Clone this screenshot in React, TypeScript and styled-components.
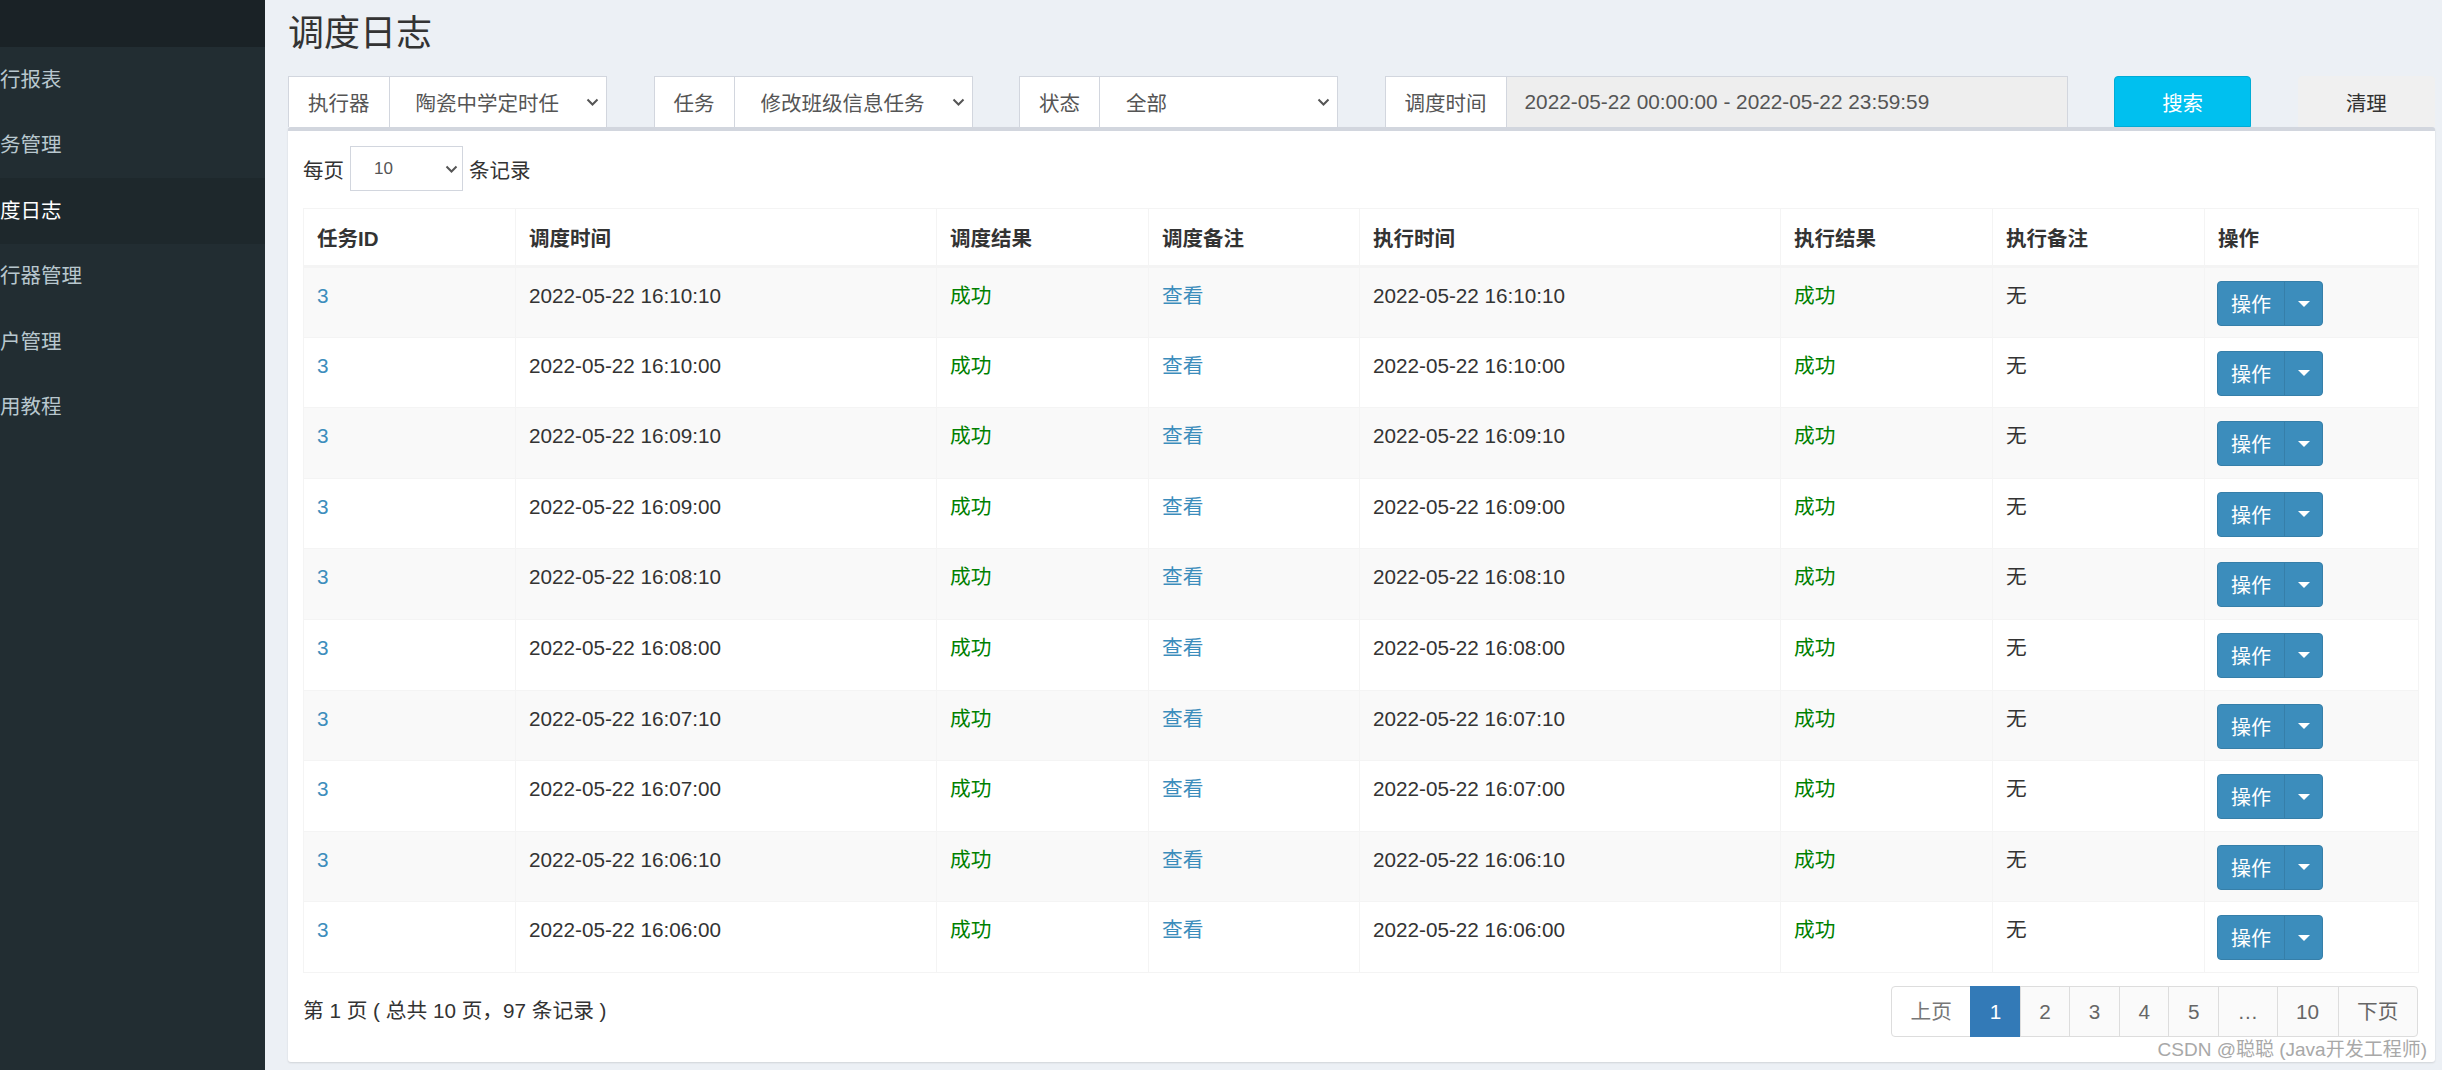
import styled, { createGlobalStyle } from "styled-components";

const GlobalStyle = createGlobalStyle`
  html, body {
    margin: 0;
    padding: 0;
  }
  body {
    background: #ecf0f5;
    font-family: "Liberation Sans", "Noto Sans CJK SC", sans-serif;
    color: #333;
  }
  * {
    box-sizing: border-box;
  }
`;

const Page = styled.div`
  position: relative;
  display: flex;
  width: 2442px;
  height: 1070px;
  overflow: hidden;
`;

const Sidebar = styled.aside`
  width: 265px;
  flex-shrink: 0;
  background: #222d32;
`;

const SidebarHead = styled.div`
  height: 47px;
  background: #1a2226;
`;

const MenuItem = styled.div<{ $active?: boolean }>`
  height: 65.5px;
  display: flex;
  align-items: center;
  padding-bottom: 4px;
  white-space: nowrap;
  font-size: 20.5px;
  color: ${(p) => (p.$active ? "#fff" : "#b8c7ce")};
  background: ${(p) => (p.$active ? "#1e282c" : "transparent")};
`;

const Main = styled.main`
  flex: 1;
  padding: 0 8px 0 23px;
`;

const Title = styled.h1`
  margin: 0;
  padding-top: 16px;
  height: 76px;
  font-size: 36px;
  line-height: 36px;
  font-weight: 400;
  color: #333;
`;

const FilterRow = styled.div`
  display: grid;
  grid-template-columns: 319px 319px 319px 683px 1fr 1fr;
  column-gap: 46.5px;
  height: 51px;
`;

const InputGroup = styled.div`
  display: flex;
  border: 1px solid #d2d6de;
  border-bottom: none;
  background: #fff;
  overflow: hidden;
`;

const Addon = styled.div`
  display: flex;
  align-items: center;
  padding: 0 19px;
  border-right: 1px solid #d2d6de;
  color: #555;
  font-size: 20.5px;
  white-space: nowrap;
`;

const SelectBox = styled.div`
  flex: 1;
  min-width: 0;
  display: flex;
  align-items: center;
  justify-content: space-between;
  padding: 0 7px 0 26px;
  color: #555;
  font-size: 20.5px;
  white-space: nowrap;

  & span {
    overflow: hidden;
  }
  & svg {
    flex-shrink: 0;
    margin-left: 8px;
  }
`;

const DateInput = styled.div`
  flex: 1;
  display: flex;
  align-items: center;
  padding-left: 18px;
  background: #eee;
  color: #555;
  font-size: 20.8px;
  white-space: nowrap;
`;

const Button = styled.button<{ $variant: "info" | "default" }>`
  height: 51px;
  border-radius: 4px 4px 0 0;
  font-family: inherit;
  font-size: 20.5px;
  cursor: pointer;
  border: 1px solid ${(p) => (p.$variant === "info" ? "#00acd6" : "#f0f0f0")};
  background: ${(p) => (p.$variant === "info" ? "#00c0ef" : "#f0f0f0")};
  color: ${(p) => (p.$variant === "info" ? "#fff" : "#333")};
`;

const Box = styled.section`
  height: 935px;
  background: #fff;
  border-top: 4px solid #d2d6de;
  border-radius: 3px;
  box-shadow: 0 1px 2px rgba(0, 0, 0, 0.12);
  padding: 15px 16px 0 15px;
`;

const LengthRow = styled.div`
  display: flex;
  align-items: center;
  gap: 6px;
  height: 45px;
  font-size: 20.5px;
  color: #333;
`;

const PerPage = styled.div`
  width: 113px;
  height: 45px;
  display: flex;
  align-items: center;
  justify-content: space-between;
  padding: 0 4px 0 23px;
  border: 1px solid #d2d6de;
  font-size: 17px;
  color: #555;
`;

const Table = styled.table`
  width: 2115px;
  margin-top: 17px;
  border-collapse: collapse;
  table-layout: fixed;
  border: 1px solid #f4f4f4;
`;

const Th = styled.th`
  height: 58px;
  padding: 0 13px;
  text-align: left;
  font-size: 20.5px;
  font-weight: 700;
  color: #333;
  border: 1px solid #f4f4f4;
  border-bottom: 3px solid #f4f4f4;
`;

const Tr = styled.tr<{ $odd: boolean }>`
  height: 70.6px;
  background: ${(p) => (p.$odd ? "#f9f9f9" : "#fff")};
`;

const Td = styled.td<{ $color?: string }>`
  vertical-align: top;
  padding: 13px 13px 0;
  line-height: 30px;
  border: 1px solid #f4f4f4;
  font-size: 20.7px;
  color: ${(p) => p.$color || "#333"};
`;

const ActionTd = styled.td`
  vertical-align: top;
  padding: 13px 12px 0;
  border: 1px solid #f4f4f4;
`;

const SplitButton = styled.div`
  display: inline-flex;
  height: 45px;
  border: 1px solid #367fa9;
  border-radius: 4px;
  overflow: hidden;
  background: #3c8dbc;
`;

const SplitMain = styled.div`
  width: 66px;
  display: flex;
  align-items: center;
  justify-content: center;
  color: #fff;
  font-size: 20px;
`;

const SplitCaret = styled.div`
  width: 38px;
  display: flex;
  align-items: center;
  justify-content: center;
  border-left: 1px solid #367fa9;

  &::after {
    content: "";
    border-top: 6px solid #fff;
    border-left: 6px solid transparent;
    border-right: 6px solid transparent;
  }
`;

const Footer = styled.div`
  display: flex;
  align-items: center;
  justify-content: space-between;
  margin-top: 13px;
  padding-right: 1px;
`;

const FooterInfo = styled.div`
  font-size: 20.7px;
  color: #333;
  margin-top: -4px;
`;

const Pager = styled.ul`
  display: flex;
  list-style: none;
  margin: 0;
  padding: 0;
`;

const PageItem = styled.li<{ $active?: boolean; $disabled?: boolean; $first?: boolean; $last?: boolean }>`
  height: 51px;
  line-height: 49px;
  padding: 0 18.5px;
  margin-left: ${(p) => (p.$first ? "0" : "-1px")};
  font-size: 20.7px;
  border: 1px solid ${(p) => (p.$active ? "#337ab7" : "#ddd")};
  background: ${(p) => (p.$active ? "#337ab7" : p.$disabled ? "#fff" : "#fafafa")};
  color: ${(p) => (p.$active ? "#fff" : p.$disabled ? "#777" : "#666")};
  border-radius: ${(p) => (p.$first ? "4px 0 0 4px" : p.$last ? "0 4px 4px 0" : "0")};
`;

const Watermark = styled.div`
  position: absolute;
  right: 15px;
  bottom: 9px;
  font-size: 19px;
  line-height: 22px;
  color: #a8a8a8;
  text-shadow: 0 0 2px #fff;
  white-space: nowrap;
`;

const Chevron = () => (
  <svg width="13" height="8" viewBox="0 0 13 8">
    <path d="M1.5 1.5 L6.5 6.5 L11.5 1.5" fill="none" stroke="#555" strokeWidth="2" />
  </svg>
);

// the sidebar is scrolled so the first character of each entry is out of view
const menu = ["行报表", "务管理", "度日志", "行器管理", "户管理", "用教程"];

const columns = [
  { label: "任务ID", width: 212 },
  { label: "调度时间", width: 421 },
  { label: "调度结果", width: 212 },
  { label: "调度备注", width: 211 },
  { label: "执行时间", width: 421 },
  { label: "执行结果", width: 212 },
  { label: "执行备注", width: 212 },
  { label: "操作", width: 214 },
];

const times = [
  "16:10:10",
  "16:10:00",
  "16:09:10",
  "16:09:00",
  "16:08:10",
  "16:08:00",
  "16:07:10",
  "16:07:00",
  "16:06:10",
  "16:06:00",
];

const pages = ["上页", "1", "2", "3", "4", "5", "…", "10", "下页"];

export default function App() {
  return (
    <>
      <GlobalStyle />
      <Page>
        <Sidebar>
          <SidebarHead />
          {menu.map((m) => (
            <MenuItem key={m} $active={m === "度日志"}>
              {m}
            </MenuItem>
          ))}
        </Sidebar>

        <Main>
          <Title>调度日志</Title>

          <FilterRow>
            <InputGroup>
              <Addon>执行器</Addon>
              <SelectBox>
                <span>陶瓷中学定时任</span>
                <Chevron />
              </SelectBox>
            </InputGroup>
            <InputGroup>
              <Addon>任务</Addon>
              <SelectBox>
                <span>修改班级信息任务</span>
                <Chevron />
              </SelectBox>
            </InputGroup>
            <InputGroup>
              <Addon>状态</Addon>
              <SelectBox>
                <span>全部</span>
                <Chevron />
              </SelectBox>
            </InputGroup>
            <InputGroup>
              <Addon>调度时间</Addon>
              <DateInput>2022-05-22 00:00:00 - 2022-05-22 23:59:59</DateInput>
            </InputGroup>
            <Button $variant="info">搜索</Button>
            <Button $variant="default">清理</Button>
          </FilterRow>

          <Box>
            <LengthRow>
              每页
              <PerPage>
                <span>10</span>
                <Chevron />
              </PerPage>
              条记录
            </LengthRow>

            <Table>
              <colgroup>
                {columns.map((c) => (
                  <col key={c.label} style={{ width: c.width }} />
                ))}
              </colgroup>
              <thead>
                <tr>
                  {columns.map((c) => (
                    <Th key={c.label}>{c.label}</Th>
                  ))}
                </tr>
              </thead>
              <tbody>
                {times.map((t, i) => (
                  <Tr key={t} $odd={i % 2 === 0}>
                    <Td $color="#3c8dbc">3</Td>
                    <Td>2022-05-22 {t}</Td>
                    <Td $color="#008000">成功</Td>
                    <Td $color="#3c8dbc">查看</Td>
                    <Td>2022-05-22 {t}</Td>
                    <Td $color="#008000">成功</Td>
                    <Td>无</Td>
                    <ActionTd>
                      <SplitButton>
                        <SplitMain>操作</SplitMain>
                        <SplitCaret />
                      </SplitButton>
                    </ActionTd>
                  </Tr>
                ))}
              </tbody>
            </Table>

            <Footer>
              <FooterInfo>第 1 页 ( 总共 10 页，97 条记录 )</FooterInfo>
              <Pager>
                {pages.map((p, i) => (
                  <PageItem
                    key={p}
                    $first={i === 0}
                    $last={i === pages.length - 1}
                    $disabled={i === 0}
                    $active={p === "1"}
                  >
                    {p}
                  </PageItem>
                ))}
              </Pager>
            </Footer>
          </Box>
        </Main>

        <Watermark>CSDN @聪聪 (Java开发工程师)</Watermark>
      </Page>
    </>
  );
}
